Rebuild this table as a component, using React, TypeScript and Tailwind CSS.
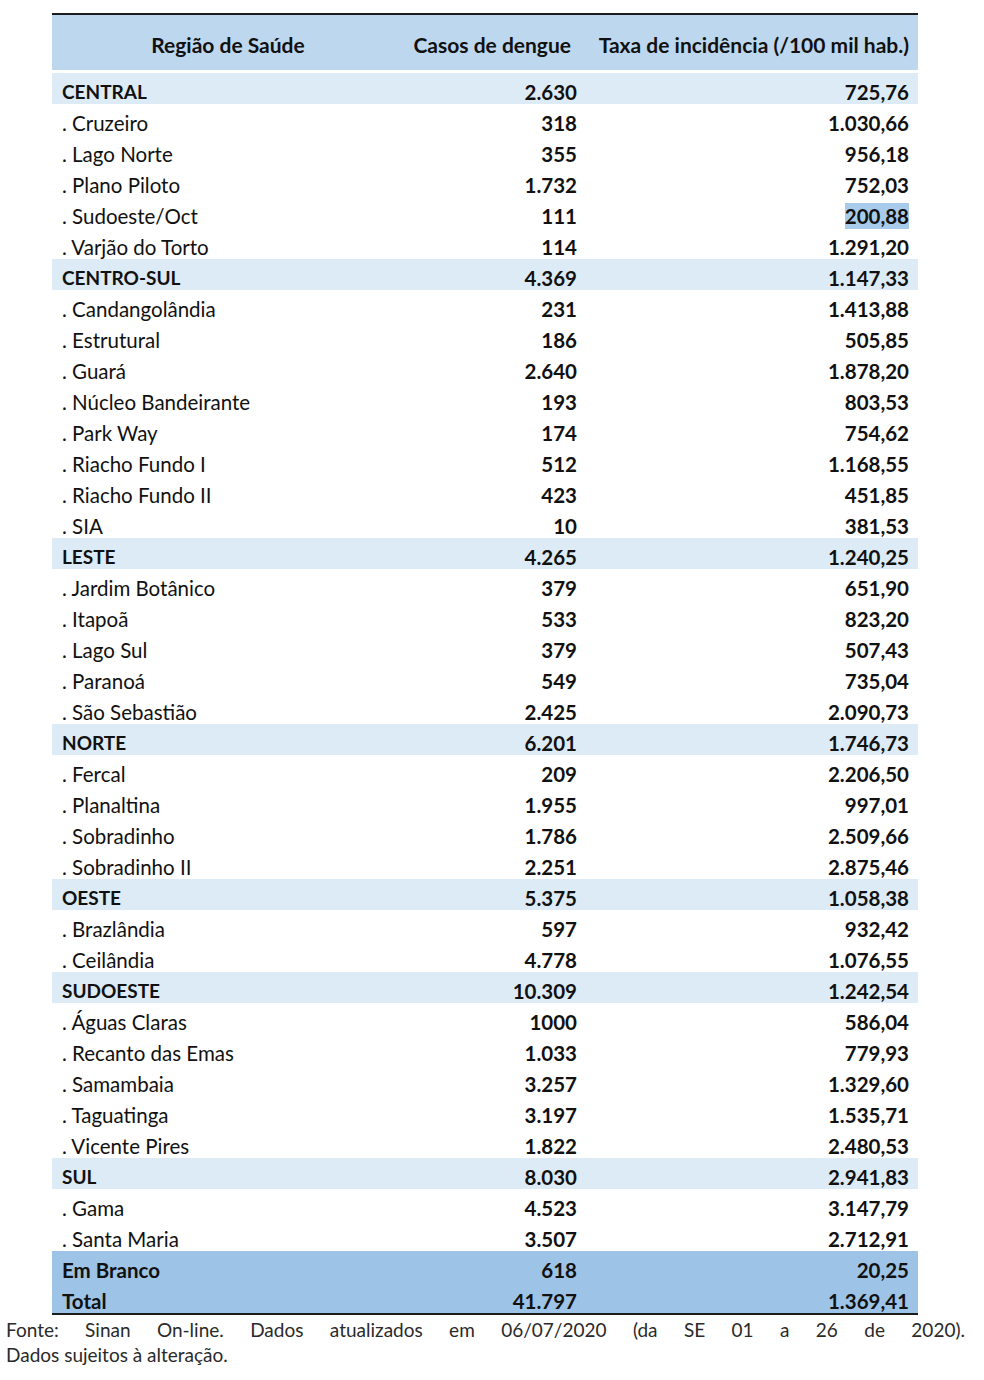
type Row = { name: string; cases: string; rate: string; kind: 'group' | 'item' | 'total'; mark?: boolean };

const rows: Row[] = [
  { name: 'CENTRAL', cases: '2.630', rate: '725,76', kind: 'group' },
  { name: '. Cruzeiro', cases: '318', rate: '1.030,66', kind: 'item' },
  { name: '. Lago Norte', cases: '355', rate: '956,18', kind: 'item' },
  { name: '. Plano Piloto', cases: '1.732', rate: '752,03', kind: 'item' },
  { name: '. Sudoeste/Oct', cases: '111', rate: '200,88', kind: 'item', mark: true },
  { name: '. Varjão do Torto', cases: '114', rate: '1.291,20', kind: 'item' },
  { name: 'CENTRO-SUL', cases: '4.369', rate: '1.147,33', kind: 'group' },
  { name: '. Candangolândia', cases: '231', rate: '1.413,88', kind: 'item' },
  { name: '. Estrutural', cases: '186', rate: '505,85', kind: 'item' },
  { name: '. Guará', cases: '2.640', rate: '1.878,20', kind: 'item' },
  { name: '. Núcleo Bandeirante', cases: '193', rate: '803,53', kind: 'item' },
  { name: '. Park Way', cases: '174', rate: '754,62', kind: 'item' },
  { name: '. Riacho Fundo I', cases: '512', rate: '1.168,55', kind: 'item' },
  { name: '. Riacho Fundo II', cases: '423', rate: '451,85', kind: 'item' },
  { name: '. SIA', cases: '10', rate: '381,53', kind: 'item' },
  { name: 'LESTE', cases: '4.265', rate: '1.240,25', kind: 'group' },
  { name: '. Jardim Botânico', cases: '379', rate: '651,90', kind: 'item' },
  { name: '. Itapoã', cases: '533', rate: '823,20', kind: 'item' },
  { name: '. Lago Sul', cases: '379', rate: '507,43', kind: 'item' },
  { name: '. Paranoá', cases: '549', rate: '735,04', kind: 'item' },
  { name: '. São Sebastião', cases: '2.425', rate: '2.090,73', kind: 'item' },
  { name: 'NORTE', cases: '6.201', rate: '1.746,73', kind: 'group' },
  { name: '. Fercal', cases: '209', rate: '2.206,50', kind: 'item' },
  { name: '. Planaltina', cases: '1.955', rate: '997,01', kind: 'item' },
  { name: '. Sobradinho', cases: '1.786', rate: '2.509,66', kind: 'item' },
  { name: '. Sobradinho II', cases: '2.251', rate: '2.875,46', kind: 'item' },
  { name: 'OESTE', cases: '5.375', rate: '1.058,38', kind: 'group' },
  { name: '. Brazlândia', cases: '597', rate: '932,42', kind: 'item' },
  { name: '. Ceilândia', cases: '4.778', rate: '1.076,55', kind: 'item' },
  { name: 'SUDOESTE', cases: '10.309', rate: '1.242,54', kind: 'group' },
  { name: '. Águas Claras', cases: '1000', rate: '586,04', kind: 'item' },
  { name: '. Recanto das Emas', cases: '1.033', rate: '779,93', kind: 'item' },
  { name: '. Samambaia', cases: '3.257', rate: '1.329,60', kind: 'item' },
  { name: '. Taguatinga', cases: '3.197', rate: '1.535,71', kind: 'item' },
  { name: '. Vicente Pires', cases: '1.822', rate: '2.480,53', kind: 'item' },
  { name: 'SUL', cases: '8.030', rate: '2.941,83', kind: 'group' },
  { name: '. Gama', cases: '4.523', rate: '3.147,79', kind: 'item' },
  { name: '. Santa Maria', cases: '3.507', rate: '2.712,91', kind: 'item' },
  { name: 'Em Branco', cases: '618', rate: '20,25', kind: 'total' },
  { name: 'Total', cases: '41.797', rate: '1.369,41', kind: 'total' },
];

const bgFor: Record<Row['kind'], string> = {
  group: 'bg-[#ddebf7]',
  item: 'bg-white',
  total: 'bg-[#9dc3e6]',
};

export default function App() {
  return (
    <div className="min-h-[1380px] w-[984px] bg-white pt-[13px] text-[#111111] font-['Lato','Liberation_Sans',sans-serif]">
      <div className="ml-[52px] w-[866px]">
        {/* Header */}
        <div className="border-t-2 border-[#1c1c1c]">
          <div className="grid h-[55px] grid-cols-[352px_181px_333px] items-center bg-[#bdd7ee] pt-[4px] text-[21px] font-bold">
            <div className="text-center">Região de Saúde</div>
            <div className="pr-[14px] text-right">Casos de dengue</div>
            <div className="pr-[9px] text-right">Taxa de incidência (/100 mil hab.)</div>
          </div>
        </div>

        <div className="mt-[3px] border-b-2 border-[#1c1c1c]">
          {rows.map((r) => (
            <div key={r.name} className={`grid h-[31px] grid-cols-[352px_181px_333px] items-center pt-[4px] text-[20.5px] ${bgFor[r.kind]}`}>
              <div className={`pl-[10px] ${r.kind === 'group' ? 'text-[19px] font-bold' : r.kind === 'total' ? 'font-bold' : 'font-normal'}`}>{r.name}</div>
              <div className="pr-[8px] text-right font-bold">{r.cases}</div>
              <div className="pr-[9px] text-right font-bold">
                {r.mark ? <span className="bg-[#a9cbeb] py-[1px]">{r.rate}</span> : r.rate}
              </div>
            </div>
          ))}
        </div>
      </div>

      {/* Fonte */}
      <div className="ml-[6px] mt-[2px] w-[959px] text-[19px] leading-[25px] text-[#2a2a2a]">
        <p className="text-justify [text-align-last:justify]">
          Fonte: Sinan On-line. Dados atualizados em 06/07/2020 (da SE 01 a 26 de 2020).
        </p>
        <p>Dados sujeitos à alteração.</p>
      </div>
    </div>
  );
}
